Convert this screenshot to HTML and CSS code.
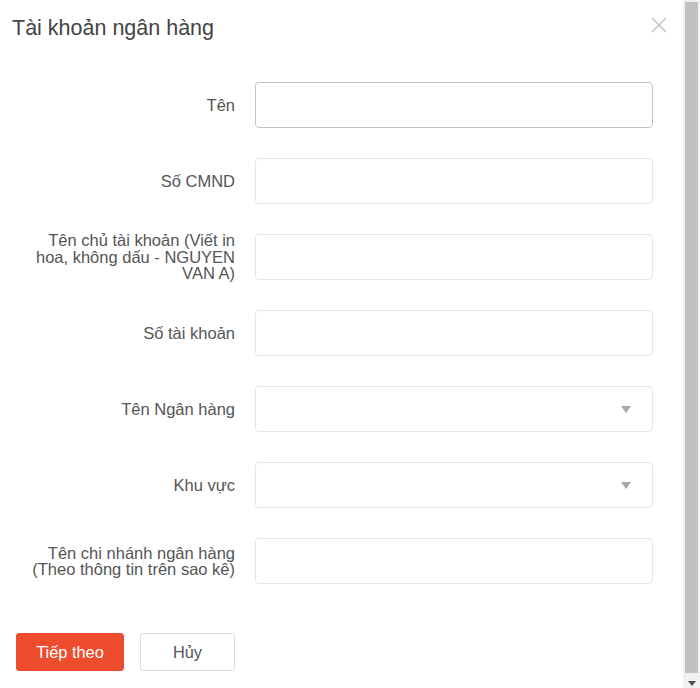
FILE: index.html
```html
<!DOCTYPE html>
<html lang="vi">
<head>
<meta charset="utf-8">
<title>Tài khoản ngân hàng</title>
<link rel="stylesheet" href="styles.css">
</head>
<body>
<div class="page">
  <div class="dialog">
    <div class="header">
      <h1 class="title">Tài khoản ngân hàng</h1>
      <button class="close" aria-label="Đóng">
        <svg width="16" height="16" viewBox="0 0 16 16"><path d="M1 1L15 15M15 1L1 15" stroke="#c4c4c4" stroke-width="1.5" fill="none"/></svg>
      </button>
    </div>
    <form class="form">
      <div class="row">
        <label class="label">Tên</label>
        <div class="field"><input class="input input-active" type="text"></div>
      </div>
      <div class="row">
        <label class="label">Số CMND</label>
        <div class="field"><input class="input" type="text"></div>
      </div>
      <div class="row">
        <label class="label">Tên chủ tài khoản (Viết in hoa, không dấu - NGUYEN VAN A)</label>
        <div class="field"><input class="input" type="text"></div>
      </div>
      <div class="row">
        <label class="label">Số tài khoản</label>
        <div class="field"><input class="input" type="text"></div>
      </div>
      <div class="row">
        <label class="label">Tên Ngân hàng</label>
        <div class="field select"><span class="arrow"></span></div>
      </div>
      <div class="row">
        <label class="label">Khu vực</label>
        <div class="field select"><span class="arrow"></span></div>
      </div>
      <div class="row">
        <label class="label">Tên chi nhánh ngân hàng (Theo thông tin trên sao kê)</label>
        <div class="field"><input class="input" type="text"></div>
      </div>
    </form>
    <div class="actions">
      <button class="btn btn-primary" type="button">Tiếp theo</button>
      <button class="btn btn-default" type="button">Hủy</button>
    </div>
  </div>
  <div class="scrollbar">
    <div class="thumb"></div>
    <div class="scroll-arrow"></div>
  </div>
</div>
</body>
</html>
```

FILE: styles.css
```css
* { box-sizing: border-box; }
html, body { margin: 0; padding: 0; background: #fff; }
body {
  font-family: "Liberation Sans", Arial, sans-serif;
  color: #555;
}
.page {
  display: flex;
  width: 700px;
  height: 688px;
  overflow: hidden;
}
.dialog {
  flex: 1;
  display: flex;
  flex-direction: column;
}
.header {
  display: flex;
  justify-content: space-between;
  align-items: flex-start;
  padding: 15px 16px 0 12px;
  height: 82px;
}
.title {
  margin: 0;
  font-size: 21.5px;
  line-height: 26px;
  font-weight: normal;
  color: #444;
}
.close {
  margin-top: 2px;
  padding: 0;
  border: 0;
  background: none;
  width: 16px;
  height: 16px;
  display: flex;
}
.form {
  display: flex;
  flex-direction: column;
  gap: 30px;
  padding-left: 25px;
}
.row {
  display: flex;
  align-items: center;
  gap: 20px;
  height: 46px;
}
.label {
  flex: 0 0 210px;
  text-align: right;
  font-size: 16.5px;
  line-height: 16.5px;
  color: #555;
}
.field {
  width: 398px;
  height: 46px;
  position: relative;
}
.input {
  display: block;
  width: 100%;
  height: 100%;
  border: 1px solid #e6e6e6;
  border-radius: 4px;
  outline: none;
  background: #fff;
  font: inherit;
}
.input-active {
  border-color: #c4c4c4;
  border-width: 1.5px;
}
.select {
  border: 1px solid #e6e6e6;
  border-radius: 4px;
  display: flex;
  align-items: center;
  justify-content: flex-end;
  padding-right: 21px;
}
.arrow {
  width: 0;
  height: 0;
  border-left: 5.5px solid transparent;
  border-right: 5.5px solid transparent;
  border-top: 7px solid #a8a8a8;
}
.actions {
  display: flex;
  gap: 16px;
  padding: 49px 0 0 16px;
}
.btn {
  height: 38px;
  border-radius: 3px;
  font-family: "Liberation Sans", Arial, sans-serif;
  font-size: 16.4px;
  padding: 0;
}
.btn-primary {
  width: 108px;
  background: #ee4d2d;
  border: 1px solid #ee4d2d;
  color: #fff;
}
.btn-default {
  width: 95px;
  background: #fff;
  border: 1px solid #dcdcdc;
  color: #555;
}
.scrollbar {
  flex: 0 0 17px;
  background: #f1f1f1;
  display: flex;
  flex-direction: column;
  align-items: center;
  padding-top: 2px;
}
.thumb {
  width: 13px;
  height: 671px;
  background: #c1c1c1;
}
.scroll-arrow {
  margin-top: 8px;
  width: 0;
  height: 0;
  border-left: 4px solid transparent;
  border-right: 4px solid transparent;
  border-top: 5px solid #505050;
}
```
